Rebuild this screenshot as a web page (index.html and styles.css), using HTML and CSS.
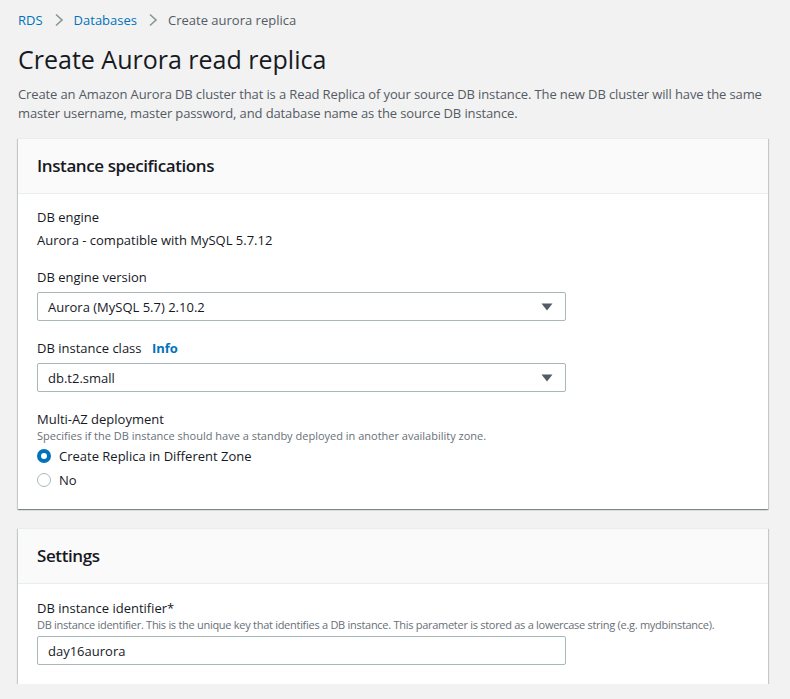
FILE: index.html
```html
<!DOCTYPE html>
<html>
<head>
<meta charset="utf-8">
<link rel="stylesheet" href="styles.css">
</head>
<body>
<div class="page">
  <nav class="crumbs">
    <a class="crumb-link">RDS</a>
    <svg class="chev" width="10" height="14" viewBox="0 0 10 14"><path d="M2 1.5 L8 7 L2 12.5" fill="none" stroke="#879596" stroke-width="1.6"/></svg>
    <a class="crumb-link">Databases</a>
    <svg class="chev" width="10" height="14" viewBox="0 0 10 14"><path d="M2 1.5 L8 7 L2 12.5" fill="none" stroke="#879596" stroke-width="1.6"/></svg>
    <span class="crumb-current">Create aurora replica</span>
  </nav>
  <h1 class="title">Create Aurora read replica</h1>
  <p class="desc">Create an Amazon Aurora DB cluster that is a Read Replica of your source DB instance. The new DB cluster will have the same master username, master password, and database name as the source DB instance.</p>

  <section class="card">
    <div class="card-head"><h2>Instance specifications</h2></div>
    <div class="card-body">
      <div class="field">
        <div class="label">DB engine</div>
        <div class="value">Aurora - compatible with MySQL 5.7.12</div>
      </div>
      <div class="field">
        <div class="label">DB engine version</div>
        <div class="select"><span>Aurora (MySQL 5.7) 2.10.2</span><svg width="12" height="8" viewBox="0 0 12 8"><path d="M0.5 0.5 H11.5 L6 7.5 Z" fill="#545b64"/></svg></div>
      </div>
      <div class="field">
        <div class="label">DB instance class <span class="info">Info</span></div>
        <div class="select"><span>db.t2.small</span><svg width="12" height="8" viewBox="0 0 12 8"><path d="M0.5 0.5 H11.5 L6 7.5 Z" fill="#545b64"/></svg></div>
      </div>
      <div class="field last">
        <div class="label">Multi-AZ deployment</div>
        <div class="hint">Specifies if the DB instance should have a standby deployed in another availability zone.</div>
        <div class="radio"><span class="dot on"></span>Create Replica in Different Zone</div>
        <div class="radio"><span class="dot"></span>No</div>
      </div>
    </div>
  </section>

  <section class="card">
    <div class="card-head"><h2>Settings</h2></div>
    <div class="card-body roomy">
      <div class="field last">
        <div class="label">DB instance identifier*</div>
        <div class="hint tight">DB instance identifier. This is the unique key that identifies a DB instance. This parameter is stored as a lowercase string (e.g. mydbinstance).</div>
        <div class="input">day16aurora</div>
      </div>
    </div>
  </section>
</div>
</body>
</html>
```

FILE: styles.css
```css
* { box-sizing: border-box; }
html, body { margin: 0; padding: 0; }
body {
  background: #f2f2f2;
  font-family: "Open Sans", "Noto Sans", sans-serif;
  color: #16191f;
  font-size: 13px;
}
.page { padding: 10px 22px 0 18px; }
.crumbs { display: flex; align-items: center; height: 20px; font-size: 13px; }
.crumb-link { color: #0073bb; }
.chev { margin: 0 10px 0 11px; }
.crumb-current { color: #545b64; }
.title { font-size: 25px; font-weight: 400; margin: 13px 0 0 0; line-height: 32px; color: #16191f; }
.desc { color: #545b64; margin: 10px 0 0 0; line-height: 19px; font-size: 13px; letter-spacing: -0.12px; }
.card {
  background: #fff;
  margin-top: 15px;
  box-shadow: 0 1px 1px 0 rgba(0,28,36,.3), 1px 1px 1px 0 rgba(0,28,36,.15), -1px 1px 1px 0 rgba(0,28,36,.15);
  border-top: 1px solid #eaeded;
}
.card + .card { margin-top: 19px; }
.card-head { background: #fafafa; border-bottom: 1px solid #eaeded; height: 55px; display: flex; align-items: center; padding: 0 19px 2px 19px; }
.card-head h2 { margin: 0; font-size: 17px; font-weight: 600; letter-spacing: -0.4px; color: #16191f; }
.card-body { padding: 13px 19px 19px 19px; }
.card-body.roomy { padding-top: 14px; }
.field { margin-bottom: 17px; }
.field.last { margin-bottom: 0; }
.label { line-height: 20px; font-size: 13px; color: #16191f; }
.info { color: #0073bb; font-weight: 700; margin-left: 7px; }
.value { margin-top: 3px; margin-bottom: 1px; line-height: 20px; }
.select, .input {
  margin-top: 5px;
  width: 529px; height: 29px;
  border: 1px solid #aab7b8; border-radius: 2px;
  display: flex; align-items: center; justify-content: space-between;
  padding: 0 12px 0 10px;
  background: #fff;
}
.hint { font-size: 11px; color: #687078; line-height: 14px; }
.hint.tight { letter-spacing: -0.28px; }
.radio { display: flex; align-items: center; line-height: 20px; margin-top: 3px; }
.radio + .radio { margin-top: 4px; }
.dot { width: 14px; height: 14px; border-radius: 50%; border: 1px solid #aab7b8; margin-right: 8px; }
.dot.on { border: 4px solid #0073bb; }
.input { margin-top: 4px; }
```
